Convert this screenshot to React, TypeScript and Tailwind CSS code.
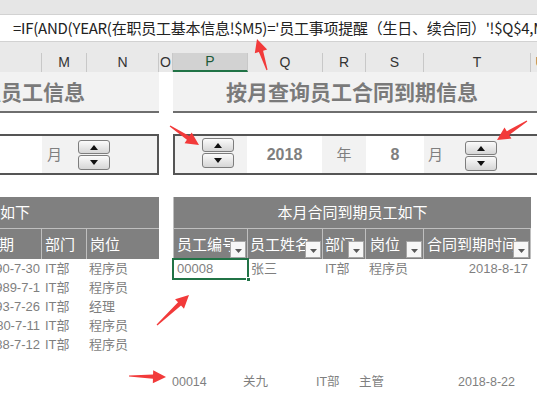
import React from "react";

const Tri = ({ up }: { up?: boolean }) => (
  <svg width="8" height="5" viewBox="0 0 8 5">
    <polygon points={up ? "0,5 8,5 4,0" : "0,0 8,0 4,5"} fill="#111" />
  </svg>
);

const Spinner = ({ className = "" }: { className?: string }) => (
  <div className={`flex w-[32px] flex-col gap-[1px] ${className}`}>
    <div className="flex h-[14px] items-center justify-center rounded-[3px] border border-[#7d7d7d] bg-linear-to-b from-[#fbfbfb] to-[#d6d6d6]">
      <Tri up />
    </div>
    <div className="flex h-[15px] items-center justify-center rounded-[3px] border border-[#7d7d7d] bg-linear-to-b from-[#fbfbfb] to-[#d6d6d6]">
      <Tri />
    </div>
  </div>
);

const Filter = () => (
  <span className="absolute bottom-[1px] right-[1px] flex h-[17px] w-[16px] items-center justify-center border border-[#a6a6a6] bg-[#f7f7f7] pt-[3px]">
    <svg width="7" height="4" viewBox="0 0 7 4">
      <polygon points="0,0 7,0 3.5,4" fill="#595959" />
    </svg>
  </span>
);

// red hand-drawn style arrows
const arrowPts = (x1: number, y1: number, x2: number, y2: number) => {
  const dx = x2 - x1;
  const dy = y2 - y1;
  const len = Math.hypot(dx, dy);
  const ux = dx / len;
  const uy = dy / len;
  const nx = -uy;
  const ny = ux;
  const bx = x2 - ux * 13;
  const by = y2 - uy * 13;
  const p = (x: number, y: number, w: number) => `${x + nx * w},${y + ny * w}`;
  return [p(x1, y1, 0.6), p(bx, by, 2.2), p(bx, by, 6.5), `${x2},${y2}`, p(bx, by, -6.5), p(bx, by, -2.2), p(x1, y1, -0.6)].join(" ");
};

const arrows = [
  [267, 70, 257, 39],
  [170, 126, 199, 145],
  [527, 121, 497, 140],
  [157, 325, 189, 295],
  [129, 376, 166, 377],
];

const letters = [
  { w: "w-[42px]", t: "" },
  { w: "w-[45px]", t: "M" },
  { w: "w-[72px]", t: "N" },
  { w: "w-[14px]", t: "O" },
  { w: "w-[75px]", t: "P", sel: true },
  { w: "w-[75px]", t: "Q" },
  { w: "w-[43px]", t: "R" },
  { w: "w-[58px]", t: "S" },
  { w: "w-[107px]", t: "T" },
  { w: "w-[20px]", t: "U" },
];

const leftRows = [
  ["1990-7-30", "IT部", "程序员"],
  ["1989-7-1", "IT部", "程序员"],
  ["1993-7-26", "IT部", "经理"],
  ["1980-7-11", "IT部", "程序员"],
  ["1988-7-12", "IT部", "程序员"],
];

export default function App() {
  return (
    <div className="relative h-[398px] w-[537px] overflow-hidden bg-white font-['Liberation_Sans','Noto_Sans_CJK_SC',sans-serif]">
      {/* top strip + formula bar */}
      <div className="h-[15px] border-b border-[#d2d2d2] bg-[#e6e6e6]" />
      <div className="flex h-[27px] items-center overflow-hidden whitespace-nowrap border-b border-[#d2d2d2] bg-white pl-[13px] font-['Noto_Sans_CJK_SC',sans-serif] text-[15px] tracking-[-0.25px] text-[#222]">
        =IF(AND(YEAR(在职员工基本信息!$M5)='员工事项提醒（生日、续合同）'!$Q$4,MONTH(在职员工基本信息!$M5)
      </div>
      <div className="h-[11px] bg-[#e9e9e9]" />

      {/* column letters */}
      <div className="flex h-[19px] bg-[#e9e9e9]">
        {letters.map((c, i) => (
          <div
            key={i}
            className={`${c.w} flex shrink-0 items-center justify-center border-r border-[#c8c8c8] text-[14px] ${
              c.sel ? "border-b-2 border-b-[#217346] bg-[#d2d2d2] text-[#1d5a38]" : "text-[#333]"
            }`}
          >
            {c.t}
          </div>
        ))}
      </div>

      {/* titles */}
      <div className="flex h-[41px] font-['Noto_Sans_CJK_SC',sans-serif] text-[21px] font-bold text-[#7a7a7a]">
        <div className="flex w-[159px] items-center justify-end overflow-hidden whitespace-nowrap border-b-2 border-[#6e6e6e] bg-[#f2f2f2] pr-[74px]">
          在职员工信息
        </div>
        <div className="w-[14px]" />
        <div className="flex flex-1 items-center justify-center border-b-2 border-[#6e6e6e] bg-[#f2f2f2] pr-[6px]">
          按月查询员工合同到期信息
        </div>
      </div>

      <div className="h-[21px]" />

      {/* spinner row */}
      <div className="flex h-[41px] font-['Noto_Sans_CJK_SC',sans-serif] text-[15px] text-[#7f7f7f]">
        <div className="flex w-[159px] border-y-2 border-r-2 border-[#555]">
          <div className="w-[42px] bg-white" />
          <div className="flex flex-1 bg-[#f2f2f2] pl-[5px]">
            <span className="w-[31px] self-center">月</span>
            <Spinner className="mt-[4px]" />
          </div>
        </div>
        <div className="w-[14px]" />
        <div className="flex flex-1 border-y-2 border-l-2 border-[#555]">
          <div className="w-[72px] bg-[#f2f2f2] pl-[27px]">
            <Spinner className="mt-[2px]" />
          </div>
          <div className="flex w-[75px] items-center justify-center bg-white font-['Liberation_Sans',sans-serif] text-[16px] font-bold">
            2018
          </div>
          <div className="flex w-[44px] items-center justify-center bg-[#f2f2f2]">年</div>
          <div className="flex w-[58px] items-center justify-center bg-white font-['Liberation_Sans',sans-serif] text-[16px] font-bold">
            8
          </div>
          <div className="flex flex-1 bg-[#f2f2f2] pl-[4px]">
            <span className="w-[37px] self-center">月</span>
            <Spinner className="mt-[5px]" />
          </div>
        </div>
      </div>

      <div className="h-[22px]" />

      {/* tables */}
      <div className="flex">
        <div className="w-[159px] shrink-0">
          <div className="flex h-[31px] items-center justify-end overflow-hidden whitespace-nowrap bg-[#808080] pr-[129px] font-['Noto_Sans_CJK_SC',sans-serif] text-[15px] text-white">
            本月生日员工如下
          </div>
          <div className="flex h-[31px] border-t border-[#bfbfbf] bg-[#808080] font-['Noto_Sans_CJK_SC',sans-serif] text-[15px] text-white">
            <div className="flex w-[42px] items-center justify-end overflow-hidden whitespace-nowrap border-r border-[#bfbfbf] pr-[27px]">
              出生日期
            </div>
            <div className="flex w-[45px] items-center border-r border-[#bfbfbf] pl-[3px]">部门</div>
            <div className="flex w-[72px] items-center pl-[3px]">岗位</div>
          </div>
          {leftRows.map((r, i) => (
            <div key={i} className="flex h-[19px] items-center text-[13px] text-[#7f7f7f]">
              <div className="flex w-[42px] justify-end overflow-hidden whitespace-nowrap pr-[2px]">{r[0]}</div>
              <div className="w-[45px] pl-[3px]">{r[1]}</div>
              <div className="w-[72px] pl-[2px]">{r[2]}</div>
            </div>
          ))}
        </div>

        <div className="w-[14px] shrink-0" />

        <div className="w-[358px] shrink-0">
          <div className="flex h-[31px] items-center justify-center border-l border-[#bfbfbf] bg-[#808080] font-['Noto_Sans_CJK_SC',sans-serif] text-[15px] text-white">
            本月合同到期员工如下
          </div>
          <div className="flex h-[31px] border-l border-t border-[#bfbfbf] bg-[#808080] font-['Noto_Sans_CJK_SC',sans-serif] text-[15px] text-white">
            <div className="relative flex w-[74px] items-center overflow-hidden whitespace-nowrap border-r border-[#bfbfbf] pl-[3px]">
              员工编号
              <Filter />
            </div>
            <div className="relative flex w-[75px] items-center overflow-hidden whitespace-nowrap border-r border-[#bfbfbf] pl-[2px]">
              员工姓名
              <Filter />
            </div>
            <div className="relative flex w-[43px] items-center overflow-hidden whitespace-nowrap border-r border-[#bfbfbf] pl-[2px]">
              部门
              <Filter />
            </div>
            <div className="relative flex w-[58px] items-center overflow-hidden whitespace-nowrap border-r border-[#bfbfbf] pl-[4px]">
              岗位
              <Filter />
            </div>
            <div className="relative flex w-[107px] items-center overflow-hidden whitespace-nowrap border-r border-[#bfbfbf] pl-[3px]">
              合同到期时间
              <Filter />
            </div>
          </div>
          <div className="flex h-[20px] items-center text-[13px] text-[#7f7f7f]">
            <div className="relative flex h-full w-[75px] items-center pl-[4px]">
              00008
              <span className="absolute inset-[-1px] border-2 border-[#217346]" />
              <span className="absolute bottom-[-3px] right-[-3px] h-[5px] w-[5px] border border-white bg-[#217346]" />
            </div>
            <div className="w-[75px] pl-[3px]">张三</div>
            <div className="w-[43px] pl-[2px]">IT部</div>
            <div className="w-[58px] pl-[3px]">程序员</div>
            <div className="w-[107px] pr-[3px] text-right">2018-8-17</div>
          </div>
        </div>
      </div>

      {/* pasted bottom row */}
      <div className="mt-[19px] flex h-[19px] items-center pl-[172px] text-[12.5px] text-[#7f7f7f]">
        <div className="w-[71px]">00014</div>
        <div className="w-[73px]">关九</div>
        <div className="w-[43px]">IT部</div>
        <div className="w-[50px]">主管</div>
        <div className="w-[106px] text-right">2018-8-22</div>
      </div>

      <svg className="pointer-events-none absolute left-0 top-0" width="537" height="398">
        {arrows.map((a, i) => (
          <polygon key={i} points={arrowPts(a[0], a[1], a[2], a[3])} fill="#f23a3a" />
        ))}
      </svg>
    </div>
  );
}
